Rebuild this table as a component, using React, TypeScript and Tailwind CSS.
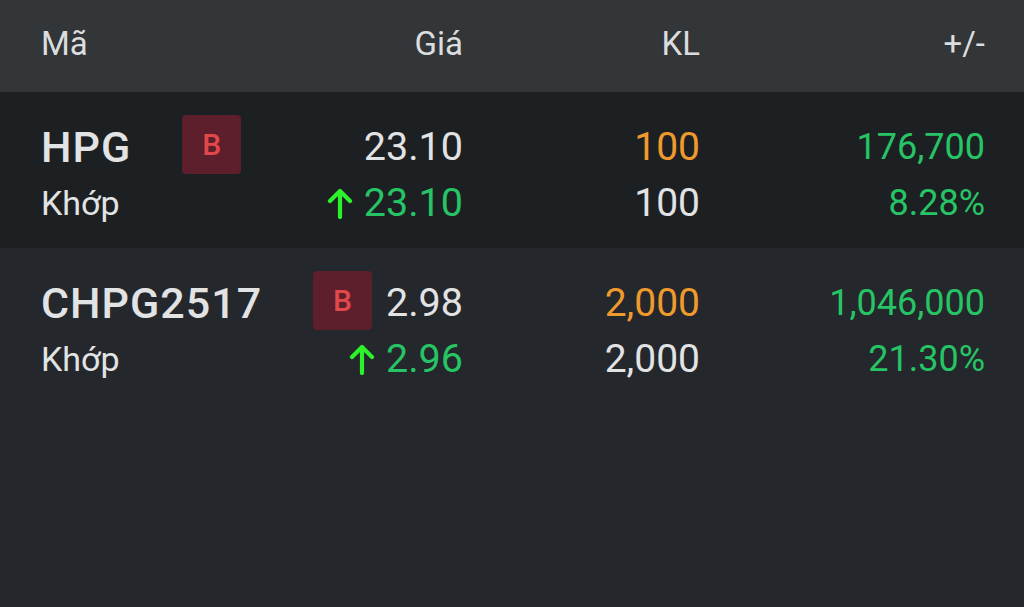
import React from "react";

type Row = {
  sym: string;
  price: string;
  match: string;
  vol: string;
  vol2: string;
  chg: string;
  pct: string;
  bg: string;
};

const rows: Row[] = [
  { sym: "HPG", price: "23.10", match: "23.10", vol: "100", vol2: "100", chg: "176,700", pct: "8.28%", bg: "bg-[#1d2023]" },
  { sym: "CHPG2517", price: "2.98", match: "2.96", vol: "2,000", vol2: "2,000", chg: "1,046,000", pct: "21.30%", bg: "bg-[#24272b]" },
];

function Arrow() {
  return (
    <svg width="26" height="32" viewBox="0 0 26 32" className="mr-[11px]">
      <path d="M13 30V4M3 14L13 4l10 10" fill="none" stroke="#2cf22c" strokeWidth="4.2" strokeLinecap="round" strokeLinejoin="round" />
    </svg>
  );
}

export default function App() {
  return (
    <div className="w-[1024px] h-[607px] bg-[#24272b] overflow-hidden text-[#e2e3e4]" style={{ fontFamily: "Roboto, 'Noto Sans', sans-serif" }}>
      <div className="h-[92px] bg-[#323639] flex items-center pl-[41px] pr-[39px] text-[33px] text-[#dcdddf] pb-[4px]">
        <div className="w-[422px] flex">
          <span className="flex-1">Mã</span>
          <span>Giá</span>
        </div>
        <div className="w-[237px] text-right">KL</div>
        <div className="w-[285px] text-right">+/-</div>
      </div>
      {rows.map((r) => (
        <div key={r.sym} className={`${r.bg} h-[156px] pl-[41px] pr-[39px] pt-[27px] flex`}>
          <div className="w-[422px] flex flex-col">
            <div className="h-[56px] flex items-center">
              <span className="text-[43px] font-medium tracking-[1px]">{r.sym}</span>
              <span className="ml-[51px] mt-[-6px] w-[59px] h-[59px] rounded-[4px] bg-[#5c1f2b] text-[#e2474a] text-[30px] font-medium flex items-center justify-center">B</span>
              <span className="flex-1 text-right text-[39.5px]">{r.price}</span>
            </div>
            <div className="h-[56px] flex items-center">
              <span className="text-[34px]">Khớp</span>
              <span className="flex-1 flex items-center justify-end">
                <Arrow />
                <span className="text-[39.5px] text-[#26c465]">{r.match}</span>
              </span>
            </div>
          </div>
          <div className="w-[237px] flex flex-col items-end text-[39px]">
            <div className="h-[56px] flex items-center text-[#ef9a2c]">{r.vol}</div>
            <div className="h-[56px] flex items-center">{r.vol2}</div>
          </div>
          <div className="w-[285px] flex flex-col items-end text-[36px] text-[#26c465]">
            <div className="h-[56px] flex items-center">{r.chg}</div>
            <div className="h-[56px] flex items-center">{r.pct}</div>
          </div>
        </div>
      ))}
    </div>
  );
}
